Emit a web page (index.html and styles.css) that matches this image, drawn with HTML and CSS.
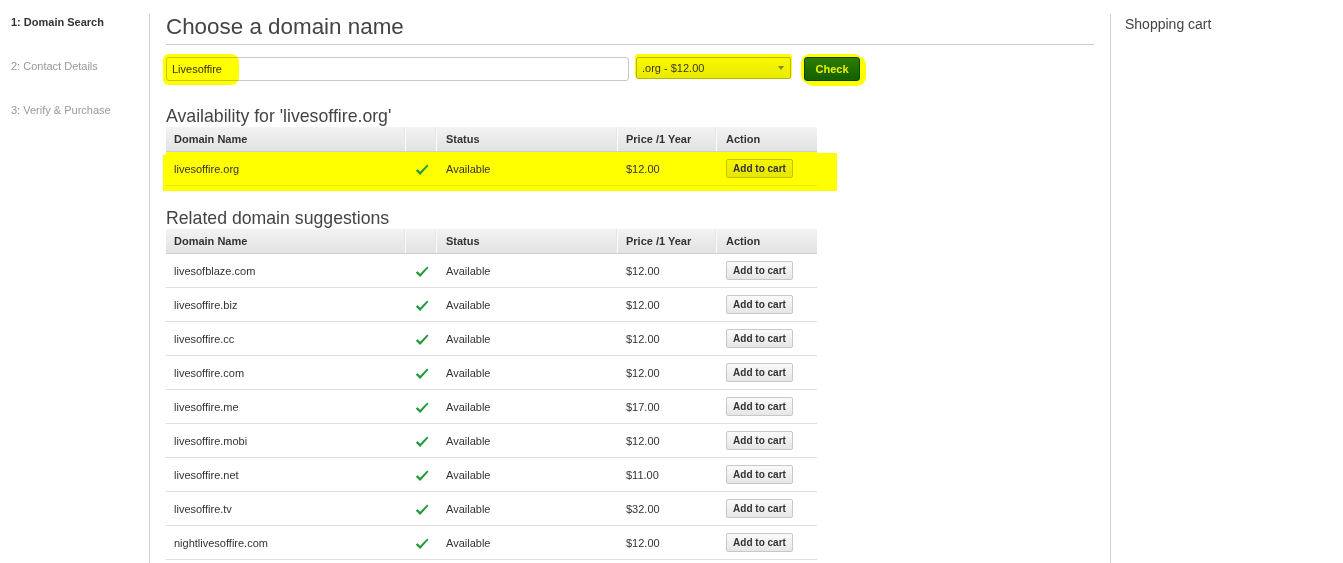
FILE: index.html
```html
<!DOCTYPE html>
<html>
<head>
<meta charset="utf-8">
<link rel="stylesheet" href="styles.css">
</head>
<body>
<div class="page">
  <nav class="steps">
    <div class="step active">1: Domain Search</div>
    <div class="step">2: Contact Details</div>
    <div class="step">3: Verify &amp; Purchase</div>
  </nav>
  <main class="main">
    <h1 class="title">Choose a domain name</h1>
    <div class="search">
      <div class="input">Livesoffire</div>
      <div class="select">.org - $12.00<span class="caret"></span></div>
      <div class="check-wrap"><button class="check">Check</button></div>
    </div>

    <h2 class="sub first">Availability for 'livesoffire.org'</h2>
    <div class="table">
      <div class="row head">
        <div class="c name">Domain Name</div><div class="c ico"></div><div class="c status">Status</div><div class="c price">Price /1 Year</div><div class="c action">Action</div>
      </div>
      <div class="row hlrow">
        <div class="c name">livesoffire.org</div><div class="c ico"><svg class="tick" viewBox="0 0 14 12"><path d="M0.8 6.8 L2.6 5.2 L5.2 7.8 L12.2 0.6 L13.4 1.8 L5.2 11 Z" fill="#1f9a3b"/></svg></div><div class="c status">Available</div><div class="c price">$12.00</div><div class="c action"><button class="add yellow">Add to cart</button></div>
      </div>
    </div>

    <h2 class="sub">Related domain suggestions</h2>
    <div class="table">
      <div class="row head">
        <div class="c name">Domain Name</div><div class="c ico"></div><div class="c status">Status</div><div class="c price">Price /1 Year</div><div class="c action">Action</div>
      </div>
      <div class="row"><div class="c name">livesofblaze.com</div><div class="c ico"><svg class="tick" viewBox="0 0 14 12"><path d="M0.8 6.8 L2.6 5.2 L5.2 7.8 L12.2 0.6 L13.4 1.8 L5.2 11 Z" fill="#1f9a3b"/></svg></div><div class="c status">Available</div><div class="c price">$12.00</div><div class="c action"><button class="add">Add to cart</button></div></div>
      <div class="row"><div class="c name">livesoffire.biz</div><div class="c ico"><svg class="tick" viewBox="0 0 14 12"><path d="M0.8 6.8 L2.6 5.2 L5.2 7.8 L12.2 0.6 L13.4 1.8 L5.2 11 Z" fill="#1f9a3b"/></svg></div><div class="c status">Available</div><div class="c price">$12.00</div><div class="c action"><button class="add">Add to cart</button></div></div>
      <div class="row"><div class="c name">livesoffire.cc</div><div class="c ico"><svg class="tick" viewBox="0 0 14 12"><path d="M0.8 6.8 L2.6 5.2 L5.2 7.8 L12.2 0.6 L13.4 1.8 L5.2 11 Z" fill="#1f9a3b"/></svg></div><div class="c status">Available</div><div class="c price">$12.00</div><div class="c action"><button class="add">Add to cart</button></div></div>
      <div class="row"><div class="c name">livesoffire.com</div><div class="c ico"><svg class="tick" viewBox="0 0 14 12"><path d="M0.8 6.8 L2.6 5.2 L5.2 7.8 L12.2 0.6 L13.4 1.8 L5.2 11 Z" fill="#1f9a3b"/></svg></div><div class="c status">Available</div><div class="c price">$12.00</div><div class="c action"><button class="add">Add to cart</button></div></div>
      <div class="row"><div class="c name">livesoffire.me</div><div class="c ico"><svg class="tick" viewBox="0 0 14 12"><path d="M0.8 6.8 L2.6 5.2 L5.2 7.8 L12.2 0.6 L13.4 1.8 L5.2 11 Z" fill="#1f9a3b"/></svg></div><div class="c status">Available</div><div class="c price">$17.00</div><div class="c action"><button class="add">Add to cart</button></div></div>
      <div class="row"><div class="c name">livesoffire.mobi</div><div class="c ico"><svg class="tick" viewBox="0 0 14 12"><path d="M0.8 6.8 L2.6 5.2 L5.2 7.8 L12.2 0.6 L13.4 1.8 L5.2 11 Z" fill="#1f9a3b"/></svg></div><div class="c status">Available</div><div class="c price">$12.00</div><div class="c action"><button class="add">Add to cart</button></div></div>
      <div class="row"><div class="c name">livesoffire.net</div><div class="c ico"><svg class="tick" viewBox="0 0 14 12"><path d="M0.8 6.8 L2.6 5.2 L5.2 7.8 L12.2 0.6 L13.4 1.8 L5.2 11 Z" fill="#1f9a3b"/></svg></div><div class="c status">Available</div><div class="c price">$11.00</div><div class="c action"><button class="add">Add to cart</button></div></div>
      <div class="row"><div class="c name">livesoffire.tv</div><div class="c ico"><svg class="tick" viewBox="0 0 14 12"><path d="M0.8 6.8 L2.6 5.2 L5.2 7.8 L12.2 0.6 L13.4 1.8 L5.2 11 Z" fill="#1f9a3b"/></svg></div><div class="c status">Available</div><div class="c price">$32.00</div><div class="c action"><button class="add">Add to cart</button></div></div>
      <div class="row"><div class="c name">nightlivesoffire.com</div><div class="c ico"><svg class="tick" viewBox="0 0 14 12"><path d="M0.8 6.8 L2.6 5.2 L5.2 7.8 L12.2 0.6 L13.4 1.8 L5.2 11 Z" fill="#1f9a3b"/></svg></div><div class="c status">Available</div><div class="c price">$12.00</div><div class="c action"><button class="add">Add to cart</button></div></div>
    </div>
  </main>
  <aside class="cart">
    <div class="cart-title">Shopping cart</div>
  </aside>
</div>
</body>
</html>
```
FILE: styles.css
```css
* { box-sizing: border-box; }
html, body { margin: 0; padding: 0; background: #fff; }
body {
  font-family: "Liberation Sans", Arial, sans-serif;
  color: #333;
  font-size: 11px;
  height: 563px;
  overflow: hidden;
}
.page {
  display: flex;
  align-items: stretch;
  padding-top: 14px;
  height: 563px;
}
.steps {
  width: 150px;
  border-right: 1px solid #d0d0d0;
  padding: 2px 0 0 11px;
  display: flex;
  flex-direction: column;
  gap: 31px;
}
.step { color: #999; font-size: 11px; line-height: 13px; }
.step.active { color: #333; font-weight: bold; }

.main {
  width: 944px;
  padding-left: 16px;
}
.title {
  margin: 0;
  font-size: 22.4px;
  line-height: 26px;
  font-weight: normal;
  color: #444;
  padding-bottom: 4px;
  border-bottom: 1px solid #ccc;
}
.search {
  display: flex;
  align-items: flex-start;
  margin-top: 12px;
  height: 24px;
}
.input {
  position: relative;
  width: 463px;
  height: 24px;
  border: 1px solid #c8c8c8;
  border-radius: 3px;
  padding: 0 5px;
  line-height: 22px;
  font-size: 11px;
  color: #333;
  background: #fff;
}
.input::after {
  content: "";
  position: absolute;
  left: -4px;
  top: -4px;
  width: 76px;
  height: 31px;
  background: #ffff00;
  border-radius: 6px 8px 8px 6px;
  mix-blend-mode: multiply;
}
.select {
  position: relative;
  margin-left: 7px;
  width: 155px;
  height: 22px;
  border: 1px solid #b8b800;
  border-radius: 2px;
  padding: 0 5px;
  line-height: 20px;
  font-size: 11px;
  color: #3a3a10;
  background: linear-gradient(#f8f800, #eaea00);
  box-shadow: 0 -2px 0 1px #ffff00;
}
.caret {
  position: absolute;
  right: 6px;
  top: 8px;
  border-left: 3px solid transparent;
  border-right: 3px solid transparent;
  border-top: 4px solid #888820;
}
.check-wrap {
  margin-left: 13px;
  background: #ffff00;
  border-radius: 6px;
  box-shadow: 0 0 0 3px #ffff00, 3px 2px 0 3px #ffff00;
}
.check {
  display: block;
  width: 56px;
  height: 24px;
  border: 1px solid #0c4200;
  border-radius: 3px;
  background: linear-gradient(#2e7d00, #145f00);
  color: #f0f000;
  font-family: "Liberation Sans", Arial, sans-serif;
  font-weight: bold;
  font-size: 11px;
  padding: 0;
}
.sub {
  margin: 24px 0 0;
  font-size: 17.7px;
  line-height: 22px;
  font-weight: normal;
  color: #444;
}
.table { width: 651px; }
.table + .sub { margin-top: 21px; }
.row {
  display: flex;
  height: 34px;
  align-items: center;
  border-bottom: 1px solid #ddd;
}
.row.head {
  height: 25px;
  background: linear-gradient(#f3f3f3, #e2e2e2);
  border-bottom: 1px solid #cfcfcf;
  font-weight: bold;
  align-items: stretch;
}
.row.head .c {
  display: flex;
  align-items: center;
  border-right: 1px solid #fafafa;
  box-shadow: inset -1px 0 0 #e6e6e6;
}
.row.head .c.action { border-right: none; box-shadow: none; }
.c { flex: none; }
.c.name { width: 240px; padding-left: 8px; }
.c.ico { width: 31px; display: flex; justify-content: center; }
.c.status { width: 181px; padding-left: 9px; }
.c.price { width: 99px; padding-left: 8px; }
.c.action { width: 100px; padding-left: 9px; }
.tick { width: 14px; height: 12px; margin-top: 2px; }
.hlrow {
  background: #ffff00;
  box-shadow: 18px 3px 0 2px #ffff00, -2px 4px 0 1px #ffff00;
  border-bottom-color: #e8e800;
}
.add {
  height: 19px;
  width: 67px;
  padding: 0;
  border: 1px solid #c8c8c8;
  border-radius: 2px;
  background: linear-gradient(#fafafa, #e6e6e6);
  font-family: "Liberation Sans", Arial, sans-serif;
  font-weight: bold;
  font-size: 10px;
  color: #333;
}
.add.yellow {
  background: linear-gradient(#f5f500, #e6e600);
  border-color: #c4c400;
}
.cart {
  margin-left: 16px;
  border-left: 1px solid #d0d0d0;
  padding: 2px 0 0 14px;
  flex: 1;
}
.cart-title { font-size: 14px; line-height: 16px; color: #444; }
```
